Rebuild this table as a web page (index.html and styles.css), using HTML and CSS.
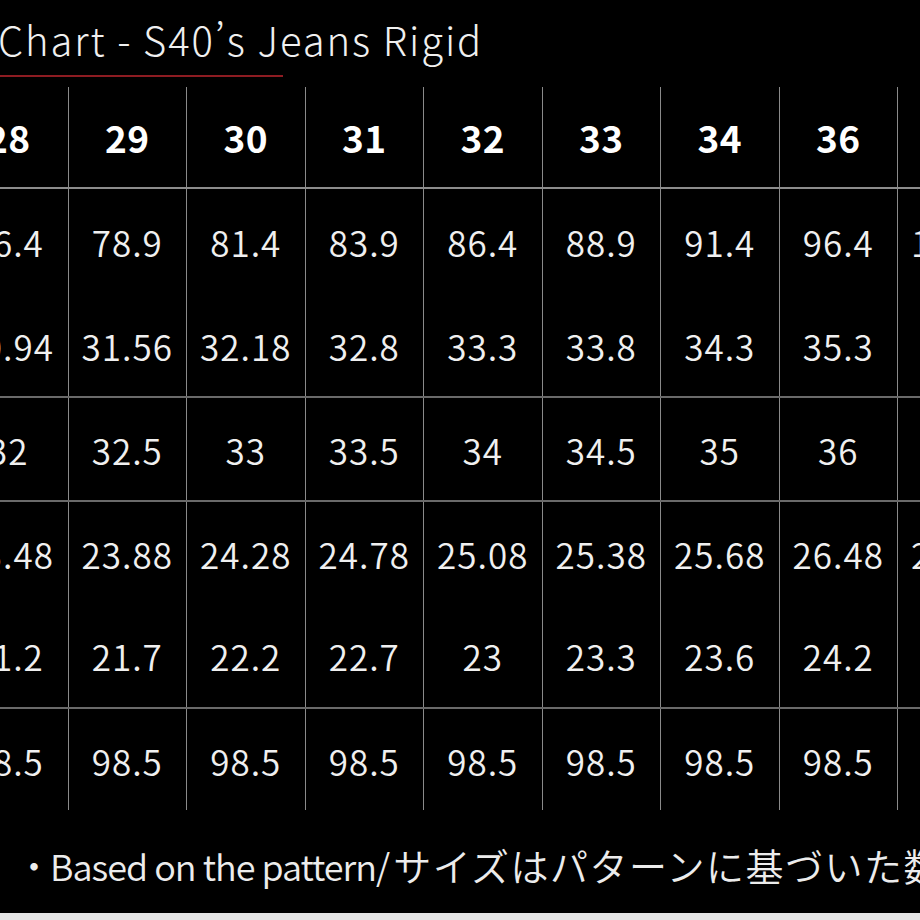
FILE: index.html
```html
<!DOCTYPE html>
<html lang="ja">
<head>
<meta charset="utf-8">
<title>Size Chart - S40’s Jeans Rigid</title>
<link rel="stylesheet" href="styles.css">
</head>
<body>
<div class="sheet">
  <header class="title-block">
    <h1 class="title">Chart - S40’s Jeans Rigid</h1>
    <div class="title-rule"></div>
  </header>
  <div class="chart">
    <div class="row head">
      <div class="cell">28</div><div class="cell">29</div><div class="cell">30</div><div class="cell">31</div><div class="cell">32</div><div class="cell">33</div><div class="cell">34</div><div class="cell">36</div><div class="cell">38</div>
    </div>
    <div class="row">
      <div class="cell">76.4</div><div class="cell">78.9</div><div class="cell">81.4</div><div class="cell">83.9</div><div class="cell">86.4</div><div class="cell">88.9</div><div class="cell">91.4</div><div class="cell">96.4</div><div class="cell">101.4</div>
    </div>
    <div class="row">
      <div class="cell">30.94</div><div class="cell">31.56</div><div class="cell">32.18</div><div class="cell">32.8</div><div class="cell">33.3</div><div class="cell">33.8</div><div class="cell">34.3</div><div class="cell">35.3</div><div class="cell">36.3</div>
    </div>
    <div class="row ruled">
      <div class="cell">32</div><div class="cell">32.5</div><div class="cell">33</div><div class="cell">33.5</div><div class="cell">34</div><div class="cell">34.5</div><div class="cell">35</div><div class="cell">36</div><div class="cell">37</div>
    </div>
    <div class="row ruled">
      <div class="cell">23.48</div><div class="cell">23.88</div><div class="cell">24.28</div><div class="cell">24.78</div><div class="cell">25.08</div><div class="cell">25.38</div><div class="cell">25.68</div><div class="cell">26.48</div><div class="cell">27.28</div>
    </div>
    <div class="row">
      <div class="cell">21.2</div><div class="cell">21.7</div><div class="cell">22.2</div><div class="cell">22.7</div><div class="cell">23</div><div class="cell">23.3</div><div class="cell">23.6</div><div class="cell">24.2</div><div class="cell">24.8</div>
    </div>
    <div class="row ruled">
      <div class="cell">98.5</div><div class="cell">98.5</div><div class="cell">98.5</div><div class="cell">98.5</div><div class="cell">98.5</div><div class="cell">98.5</div><div class="cell">98.5</div><div class="cell">98.5</div><div class="cell">98.5</div>
    </div>
  </div>
  <p class="note"><span class="bullet">・</span><span class="note-en">Based on the pattern/</span><span class="note-ja">サイズはパターンに基づいた数値です</span></p>
</div>
<div class="bottom-strip"></div>
</body>
</html>
```

FILE: styles.css
```css
html, body {
  margin: 0;
  padding: 0;
  background: #000;
  overflow: hidden;
}

body {
  width: 920px;
  height: 920px;
  display: flex;
  flex-direction: column;
  color: #f2f2f2;
  font-family: "Noto Sans CJK JP", "Noto Sans", sans-serif;
}

.sheet {
  flex: 1;
  display: flex;
  flex-direction: column;
  overflow: hidden;
}

.title-block {
  padding-top: 14px;
  margin-left: -2px;
}

.title {
  margin: 0;
  font-size: 40px;
  font-weight: 300;
  line-height: 50px;
  letter-spacing: 1.9px;
  white-space: nowrap;
  color: #f0f0f0;
}

.title-rule {
  margin-top: 11px;
  margin-left: 2px;
  width: 283px;
  height: 2px;
  background: #8e1c22;
}

.chart {
  margin-top: 10px;
  margin-left: -51px;
  width: 1066.5px;
  display: flex;
  flex-direction: column;
}

.row {
  display: grid;
  grid-template-columns: repeat(9, 118.5px);
  height: 103.5px;
  box-sizing: border-box;
}

.row.head {
  height: 102px;
  border-bottom: 2px solid #8c8c8c;
}

.row.ruled {
  border-top: 2px solid #6a6a6a;
}

.cell {
  display: flex;
  align-items: center;
  justify-content: center;
  white-space: nowrap;
  border-left: 1.5px solid #8a8a8a;
  font-size: 35px;
  font-weight: 350;
  letter-spacing: 1px;
  color: #f0f0f0;
  padding-top: 2px;
  box-sizing: border-box;
}

.cell:first-child {
  border-left: none;
}

.head .cell {
  font-size: 37px;
  font-weight: 700;
  letter-spacing: 0.5px;
  color: #fff;
  padding-top: 0;
}

.note {
  margin: 33px 0 0 0;
  padding-left: 16px;
  font-size: 36px;
  font-weight: 350;
  line-height: 44px;
  white-space: nowrap;
  color: #ececec;
}

.bullet {
  display: inline-block;
  width: 34px;
}

.note-en {
  letter-spacing: -1px;
}

.note-ja {
  font-size: 38px;
  letter-spacing: 1.5px;
  margin-left: 4px;
}

.bottom-strip {
  height: 7px;
  background: #e6e6e6;
  flex: none;
}
```
